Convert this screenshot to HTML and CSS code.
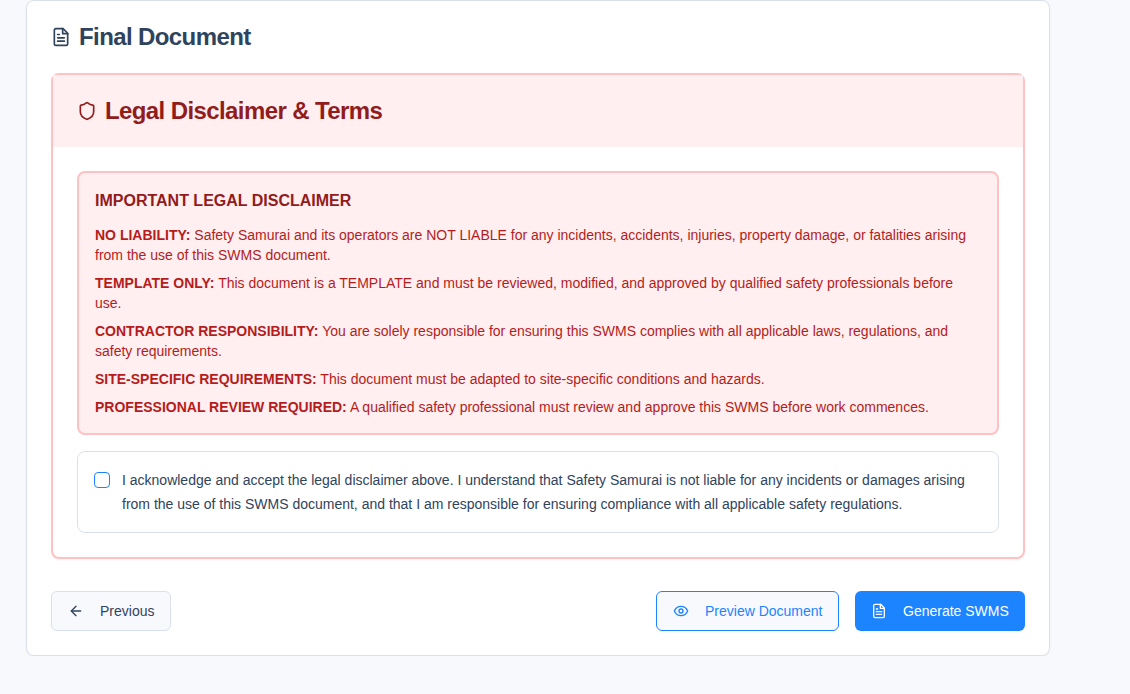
FILE: index.html
```html
<!DOCTYPE html>
<html lang="en">
<head>
<meta charset="utf-8">
<title>Final Document</title>
<link rel="stylesheet" href="styles.css">
</head>
<body>
<main class="card">
  <h1 class="title">
    <svg class="icon icon-title" viewBox="0 0 24 24"><path d="M14.5 2H6a2 2 0 0 0-2 2v16a2 2 0 0 0 2 2h12a2 2 0 0 0 2-2V7.5L14.5 2z"/><path d="M14 2v6h6"/><path d="M10 9H8"/><path d="M16 13H8"/><path d="M16 17H8"/></svg>
    <span>Final Document</span>
  </h1>
  <section class="legal">
    <h2 class="legal-head">
      <svg class="icon icon-title" viewBox="0 0 24 24"><path d="M20 13c0 5-3.5 7.5-7.66 8.95a1 1 0 0 1-.67-.01C7.5 20.5 4 18 4 13V6a1 1 0 0 1 1-1c2 0 4.5-1.2 6.24-2.72a1.17 1.17 0 0 1 1.52 0C14.51 3.81 17 5 19 5a1 1 0 0 1 1 1z"/></svg>
      <span>Legal Disclaimer &amp; Terms</span>
    </h2>
    <div class="legal-body">
      <div class="notice">
        <h3>IMPORTANT LEGAL DISCLAIMER</h3>
        <p><strong>NO LIABILITY:</strong> Safety Samurai and its operators are NOT LIABLE for any incidents, accidents, injuries, property damage, or fatalities arising<br>from the use of this SWMS document.</p>
        <p><strong>TEMPLATE ONLY:</strong> This document is a TEMPLATE and must be reviewed, modified, and approved by qualified safety professionals before<br>use.</p>
        <p><strong>CONTRACTOR RESPONSIBILITY:</strong> You are solely responsible for ensuring this SWMS complies with all applicable laws, regulations, and<br>safety requirements.</p>
        <p><strong>SITE-SPECIFIC REQUIREMENTS:</strong> This document must be adapted to site-specific conditions and hazards.</p>
        <p><strong>PROFESSIONAL REVIEW REQUIRED:</strong> A qualified safety professional must review and approve this SWMS before work commences.</p>
      </div>
      <label class="accept">
        <span class="box"></span>
        <span>I acknowledge and accept the legal disclaimer above. I understand that Safety Samurai is not liable for any incidents or damages arising<br>from the use of this SWMS document, and that I am responsible for ensuring compliance with all applicable safety regulations.</span>
      </label>
    </div>
  </section>
  <div class="actions">
    <button class="btn prev"><svg class="icon" viewBox="0 0 24 24"><path d="m12 19-7-7 7-7"/><path d="M19 12H5"/></svg><span>Previous</span></button>
    <div class="right">
      <button class="btn preview"><svg class="icon" viewBox="0 0 24 24"><path d="M2 12s3-7 10-7 10 7 10 7-3 7-10 7-10-7-10-7Z"/><circle cx="12" cy="12" r="3"/></svg><span>Preview Document</span></button>
      <button class="btn generate"><svg class="icon" viewBox="0 0 24 24"><path d="M14.5 2H6a2 2 0 0 0-2 2v16a2 2 0 0 0 2 2h12a2 2 0 0 0 2-2V7.5L14.5 2z"/><path d="M14 2v6h6"/><path d="M10 9H8"/><path d="M16 13H8"/><path d="M16 17H8"/></svg><span>Generate SWMS</span></button>
    </div>
  </div>
</main>
</body>
</html>
```
FILE: styles.css
```css
* { box-sizing: border-box; margin: 0; }
body {
  background: #f8f9fd;
  color: #30435d;
  font-family: "Liberation Sans", Arial, sans-serif;
  font-size: 14px;
  line-height: 20px;
}
.icon {
  width: 16px; height: 16px; flex: none;
  fill: none; stroke: currentColor; stroke-width: 2;
  stroke-linecap: round; stroke-linejoin: round;
}
.icon-title { width: 20px; height: 20px; }
.card {
  width: 1024px; height: 656px; margin-left: 26px; padding: 24px;
  background: #fff; border: 1px solid #dae1ec; border-radius: 8px;
  box-shadow: 0 1px 2px rgba(0,0,0,.05);
}
.title, .legal-head {
  display: flex; align-items: center; gap: 8px;
  font-size: 24px; line-height: 24px; font-weight: 600; letter-spacing: -.6px;
}
.legal {
  margin-top: 24px; height: 486px; border: 2px solid #ffc1c1; border-radius: 8px;
  box-shadow: 0 1px 2px rgba(0,0,0,.05);
}
.legal-head { height: 72px; padding: 0 24px; background: #ffeff0; color: #921b1b; }
.legal-body { padding: 24px; }
.notice {
  height: 264px; padding: 16px; background: #ffeff0; color: #b51c1c;
  border: 2px solid #ffc1c1; border-radius: 8px; white-space: nowrap;
}
.notice h3 { font-size: 16px; line-height: 24px; color: #921b1b; margin-bottom: 12px; }
.notice p + p { margin-top: 8px; }
.accept {
  display: flex; gap: 12px; margin-top: 16px; height: 82px; padding: 16px;
  border: 1px solid #dae1ec; border-radius: 8px; line-height: 24px; white-space: nowrap;
}
.box { width: 16px; height: 16px; margin-top: 4px; border: 1px solid #1d84ff; border-radius: 4px; flex: none; }
.actions { display: flex; justify-content: space-between; margin-top: 32px; }
.right { display: flex; gap: 16px; }
.btn {
  display: flex; align-items: center; gap: 16px; height: 40px; padding: 0 16px;
  border: 1px solid #dae1ec; border-radius: 6px; background: #f8f9fd; color: #30435d;
  font: 14px/20px "Liberation Sans", Arial, sans-serif; white-space: nowrap;
}
.prev { width: 120px; }
.preview { width: 183px; border-color: #1d84ff; color: #1d84ff; }
.generate { width: 170px; border: 0; background: #1d84ff; color: #fff; }
```
